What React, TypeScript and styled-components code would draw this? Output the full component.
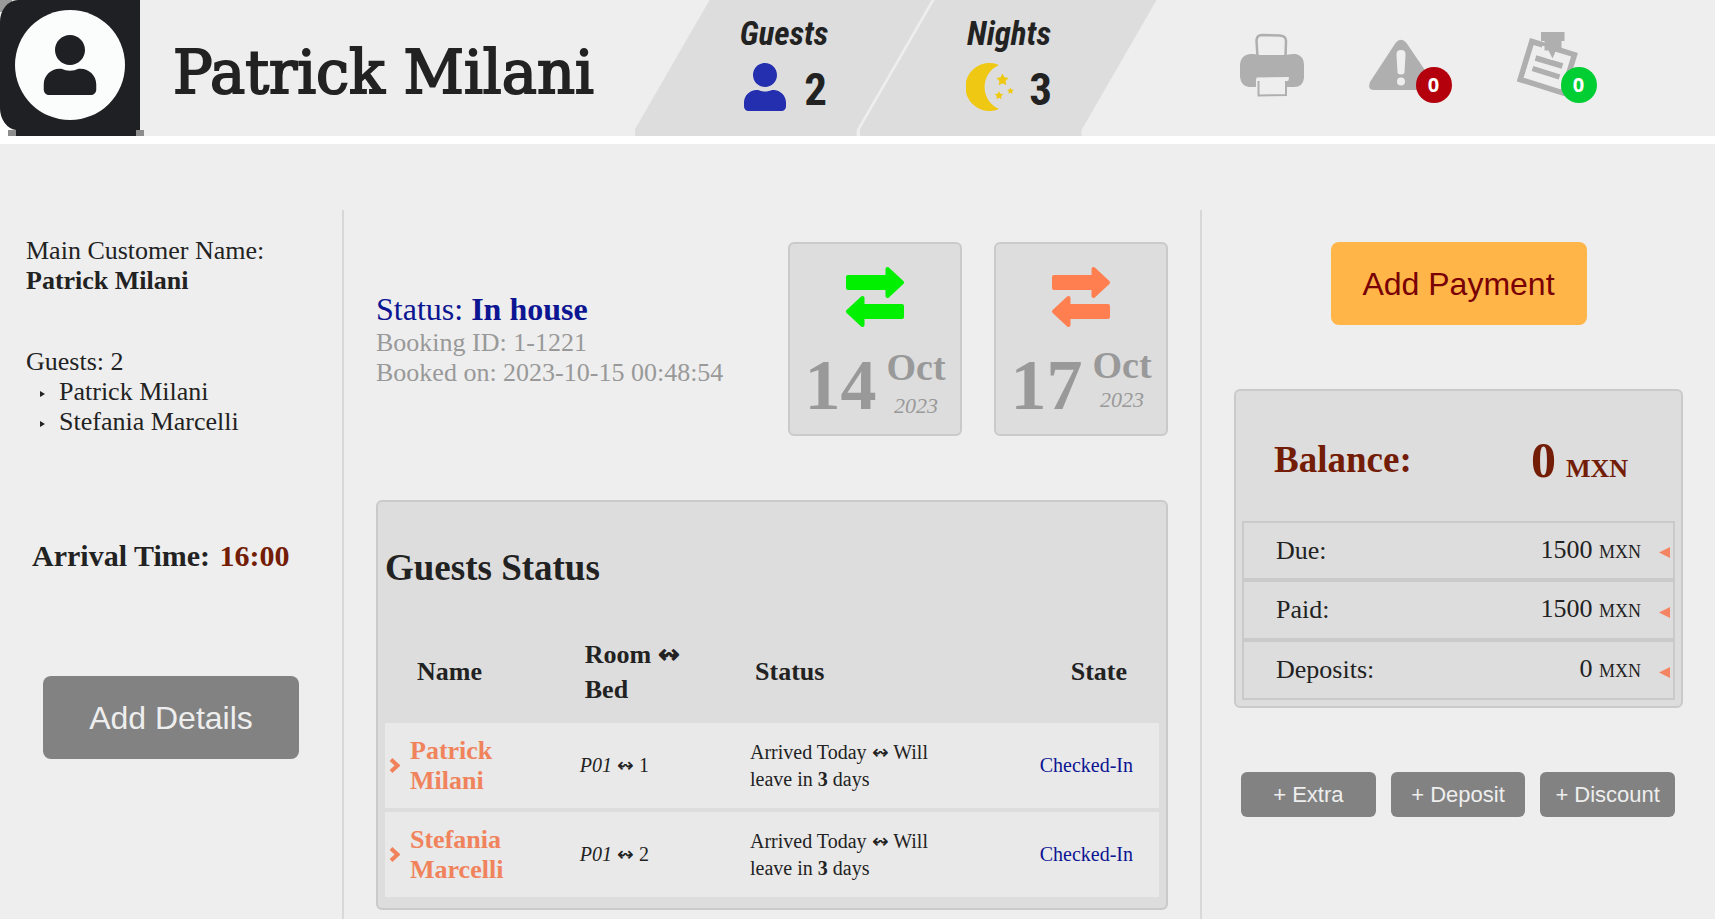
import React from "react";
import styled, { createGlobalStyle } from "styled-components";
import { FaUser } from "react-icons/fa";

const GlobalStyle = createGlobalStyle`
  *, *::before, *::after { box-sizing: border-box; }
  html, body, #root { margin: 0; min-height: 100vh; }
  body {
    background: #eee;
    color: #222;
    font: 26px/30px "Liberation Serif", "Times New Roman", serif;
    overflow-x: hidden;
  }
  h1, h2, h3, p, ul { margin: 0; padding: 0; }
  button { border: 0; cursor: pointer; }
`;

const Page = styled.div`
  display: flex;
  flex-direction: column;
  min-height: 100vh;
`;

/* ---------- header ---------- */

const Header = styled.header`
  display: flex;
  height: 144px;
  border-bottom: 8px solid #fff;
`;

const Identity = styled.div`
  display: flex;
  flex: 0 0 37%;
  gap: 29px;
`;

const CustomerName = styled.h1`
  padding-top: 38px;
  font: 400 59px/70px "DejaVu Serif", serif;
  white-space: nowrap;
  -webkit-text-stroke: 2px #222;
`;

const Tile = styled.section`
  display: flex;
  flex-direction: column;
  align-items: center;
  gap: 10px;
  width: 297px;
  padding: 15px 0 0 2px;
  background: #ddd;
  clip-path: polygon(75px 0, 100% 0, calc(100% - 75px) 130px, calc(100% - 75px) 100%, 0 100%, 0 130px);

  & + & { margin-left: -72px; }
`;

const TileTitle = styled.h2`
  font: italic 700 33px/38px "Roboto Condensed", Roboto, sans-serif;
`;

const TileValue = styled.div`
  display: flex;
  align-items: flex-start;
  gap: 15px;
  font: 700 45px/53px "Roboto Condensed", Roboto, sans-serif;
`;

const Actions = styled.nav`
  display: flex;
  align-items: flex-start;
  gap: 65px;
  padding: 33px 0 0 83px;
`;

const IconButton = styled.button<{ $width: number }>`
  position: relative;
  display: flex;
  align-items: center;
  width: ${(p) => p.$width}px;
  height: 64px;
  padding: 0;
  background: none;
  color: #afafaf;
`;

const Badge = styled.span<{ $color: string }>`
  position: absolute;
  right: 0;
  top: 34px;
  width: 36px;
  height: 36px;
  border-radius: 50%;
  background: ${(p) => p.$color};
  color: #fff;
  font: 700 20px/36px "Noto Sans", sans-serif;
  text-align: center;
`;

/* ---------- columns ---------- */

const Columns = styled.main`
  display: grid;
  grid-template-columns: 344fr 858fr 513fr;
  flex: 1;
  padding-top: 66px;
`;

const Column = styled.section<{ $divided?: boolean }>`
  min-width: 0;
  padding: 32px 32px 10px;
  border-right: ${(p) => (p.$divided ? "2px solid #d8d8d8" : "0")};
`;

const SideColumn = styled(Column)`
  padding: 26px 26px 10px;
`;

const Panel = styled.section`
  border: 2px solid #cacaca;
  border-radius: 6px;
  background: #ddd;
`;

const BigButton = styled.button<{ $accent?: boolean }>`
  display: block;
  width: 256px;
  height: 83px;
  margin: 0 auto;
  border-radius: 8px;
  background: ${(p) => (p.$accent ? "#ffb547" : "#828282")};
  color: ${(p) => (p.$accent ? "#780005" : "#eee")};
  font: 32px/38px "Liberation Sans", Arial, sans-serif;
`;

const GuestBlock = styled.div`
  margin-top: 51px;
`;

const GuestList = styled.ul`
  list-style: none;
`;

const GuestItem = styled.li`
  display: flex;
  align-items: center;
  gap: 14px;
  padding-left: 14px;

  svg { margin-top: 3px; }
`;

const Arrival = styled.p`
  margin: 101px 0 103px 6px;
  font-weight: 700;
  font-size: 30px;
  line-height: 35px;
  white-space: nowrap;
`;

const ArrivalTime = styled.span`
  margin-left: 2px;
  color: #731c06;
`;

/* ---------- booking summary ---------- */

const Summary = styled.div`
  display: flex;
  align-items: center;
  gap: 32px;
  margin-bottom: 64px;
`;

const BookingInfo = styled.div`
  flex: 1;
  color: #999;
`;

const BookingStatus = styled.p`
  color: #0c1592;
  font-size: 32px;
  line-height: 37px;
`;

const DateCard = styled(Panel)`
  display: flex;
  flex-direction: column;
  align-items: center;
  justify-content: space-between;
  width: 174px;
  height: 194px;
  padding: 23px 0 11px;
  color: #999;
`;

const DateRow = styled.div`
  display: flex;
  align-items: flex-start;
  gap: 10px;
  height: 76px;
`;

const Day = styled.span`
  font-weight: 700;
  font-size: 72px;
  line-height: 76px;
`;

const MonthYear = styled.span<{ $raised?: boolean }>`
  display: flex;
  flex-direction: column;
  align-items: center;
  gap: ${(p) => (p.$raised ? 3 : 7)}px;
  padding-top: ${(p) => (p.$raised ? 0 : 2)}px;
`;

const Month = styled.b`
  font-size: 38px;
  line-height: 37px;
`;

const Year = styled.i`
  font-size: 22px;
  line-height: 26px;
`;

/* ---------- guests table ---------- */

const GuestsPanel = styled(Panel)`
  padding: 44px 7px 7px;
`;

const PanelTitle = styled.h3`
  font-size: 37px;
  line-height: 43px;
`;

const GuestsTable = styled.table`
  width: 100%;
  margin-top: 31px;
  border-collapse: separate;
  border-spacing: 0 4px;
  table-layout: fixed;
`;

const HeadCell = styled.th<{ $width: number; $right?: boolean }>`
  width: ${(p) => p.$width}%;
  height: 95px;
  padding: ${(p) => (p.$right ? "0 32px 0 0" : "0 14px")};
  text-align: ${(p) => (p.$right ? "right" : "left")};
  font-size: 26px;
  line-height: 35px;

  &:first-child { padding-left: 32px; }
`;

const Cell = styled.td`
  height: 85px;
  padding: 0 9px;
  background: #e9e9e9;
  font-size: 20px;
  line-height: 27px;
`;

const NameCell = styled(Cell)`
  padding-left: 4px;
`;

const StateCell = styled(Cell)`
  padding-right: 26px;
  color: #0c1592;
  text-align: right;
`;

const GuestLink = styled.a`
  display: flex;
  align-items: center;
  gap: 10px;
  color: #f0835c;
  font-weight: 700;
  font-size: 26px;
  line-height: 30px;
  text-decoration: none;

  svg { flex: none; }
`;

/* ---------- balance ---------- */

const BalancePanel = styled(Panel)`
  margin: 64px 0;
  padding: 0 6px 6px;
`;

const BalanceRow = styled.div`
  display: flex;
  align-items: center;
  justify-content: space-between;
  height: 130px;
  padding: 6px 47px 0 32px;
  color: #731c06;
`;

const Total = styled.strong`
  padding-top: 10px;
  font-size: 50px;
  line-height: 56px;
`;

const TotalCurrency = styled.span`
  margin-left: 10px;
  font-size: 26px;
`;

const Ledger = styled.div`
  border: 2px solid #cacaca;
`;

const LedgerRow = styled.button`
  display: flex;
  align-items: center;
  width: 100%;
  height: 55px;
  padding: 0 3px 0 32px;
  background: none;
  color: #222;
  font: 26px/30px "Liberation Serif", "Times New Roman", serif;
  text-align: left;

  & + & {
    height: 60px;
    border-top: 4px solid #cacaca;
  }

  svg { margin: 4px 0 0 18px; }
`;

const Amount = styled.span`
  margin-left: auto;
`;

const Currency = styled.small`
  font-size: 18px;
`;

const Extras = styled.div`
  display: grid;
  grid-template-columns: repeat(3, 1fr);
  gap: 15px;
  padding: 0 8px 0 7px;
`;

const SmallButton = styled.button`
  height: 45px;
  padding: 0;
  border-radius: 6px;
  background: #828282;
  color: #eee;
  font: 22px/26px "Liberation Sans", Arial, sans-serif;
  white-space: nowrap;
`;

/* ---------- drawings ---------- */

const Avatar = () => (
  <svg width="144" height="136" viewBox="0 0 144 136" role="img" aria-label="Customer">
    <rect width="12" height="12" fill="#999" />
    <path d="M0 112h16v24H0z" fill="#fff" />
    <path d="M140 0H18A18 22 0 0 0 0 22v86a18 22 0 0 0 16 22v6h124z" fill="#1f2023" />
    <path d="M8 130h8v6H8zM136 130h8v6h-8z" fill="#8d8d8d" />
    <circle cx="70" cy="65" r="55" fill="#fbfcfc" />
    <FaUser x="40" y="35" size={60} color="#1f2023" />
  </svg>
);

const star = (cx: number, cy: number, r: number) =>
  Array.from({ length: 10 }, (_, i) => {
    const a = (Math.PI * i) / 5 - Math.PI / 2;
    const d = i % 2 ? r / 2 : r;
    return `${cx + d * Math.cos(a)},${cy + d * Math.sin(a)}`;
  }).join(" ");

const Moon = () => (
  <svg width="48" height="48" viewBox="0 0 48 48" fill="#efc814" aria-hidden="true">
    <path d="M33 2A24 24 0 1 0 33 46A24 24 0 0 1 33 2Z" />
    <polygon points={star(36.5, 17, 6.5)} />
    <polygon points={star(44.5, 28, 3.5)} />
    <polygon points={star(33, 32.5, 4.5)} />
  </svg>
);

const Printer = () => (
  <svg width="64" height="64" viewBox="0 0 64 64" fill="currentColor" aria-hidden="true">
    <path
      d="M17.500 24 16.500 8Q16.500 2 22 2L40 2.500Q46 3 46 8L45.500 24"
      fill="none"
      stroke="currentColor"
      strokeWidth="2.500"
    />
    <path d="M10 21Q14 20.500 20 22H46Q52 20.500 56 21Q64 23 64 32V45Q63 54 54 54H47V46H16V54H9Q1 53 0 44V31Q1 22 10 21Z" />
    <path d="M16.500 44.500 49 44 48.500 47.500 46 48.500 46 62 18 62.500 18 49 16.500 47.500Z" fill="#eee" />
    <path d="M18.500 48V62.500L46 62V48" fill="none" stroke="currentColor" strokeWidth="2" />
  </svg>
);

const Warning = () => (
  <svg width="65" height="64" viewBox="0 0 65 64" fill="currentColor" aria-hidden="true">
    <path d="M26.500 10Q32 3.500 37.500 10L64 49Q66 57 60 57H5Q-2 57 1 49Z" />
    <path d="M27.500 22Q27 17 32 17Q37 17 36.500 22L35.500 39Q35.500 41.500 32 41.500Q28.500 41.500 28.500 39Z" fill="#eee" />
    <circle cx="32" cy="48.500" r="4" fill="#eee" />
  </svg>
);

const Notice = () => (
  <svg width="62" height="66" viewBox="0 0 62 66" fill="currentColor" aria-hidden="true">
    <path d="M14.800 9.500 57.500 22.700 45.600 60.800 3.200 47.500Z" fill="none" stroke="currentColor" strokeWidth="5.500" />
    <path d="M18.500 26 45.500 34M15.500 36.500 42.500 45" stroke="currentColor" strokeWidth="5.500" />
    <path d="M25 14H29V19L33 20 35 28 29 26 25 20Z" fill="#eee" />
    <path d="M24 0H47.500V9H44.500V19.500H38.500L35.500 26.500 31.500 18.500H27.500V9H24Z" />
  </svg>
);

const Exchange = ({ color }: { color: string }) => (
  <svg width="58" height="60" viewBox="0 0 58 60" aria-hidden="true">
    <path
      d="M2 10H41.500V2L56 15.500 41.500 29V21H2ZM56 39H16.500V31L2 44.500 16.500 58V50H56Z"
      fill={color}
      stroke={color}
      strokeWidth="4"
      strokeLinejoin="round"
    />
  </svg>
);

const Bullet = () => (
  <svg width="5" height="6" viewBox="0 0 5 6" fill="#222" aria-hidden="true">
    <path d="M0 0 5 3 0 6Z" />
  </svg>
);

const Chevron = () => (
  <svg width="11" height="15" viewBox="0 0 11 15" fill="none" aria-hidden="true">
    <path d="M2 1.500 8.500 7.500 2 13.500" stroke="#f0835c" strokeWidth="4" />
  </svg>
);

const Marker = () => (
  <svg width="11" height="11" viewBox="0 0 11 11" fill="#f58562" aria-hidden="true">
    <path d="M11 0V11L0 5.500Z" />
  </svg>
);

/* ---------- data ---------- */

const guests = [
  { first: "Patrick", last: "Milani", room: "P01", bed: 1 },
  { first: "Stefania", last: "Marcelli", room: "P01", bed: 2 },
];

const ledger = [
  { label: "Due:", amount: 1500 },
  { label: "Paid:", amount: 1500 },
  { label: "Deposits:", amount: 0 },
];

const dates = [
  { day: 14, color: "#00f000", raised: false },
  { day: 17, color: "#ff7f50", raised: true },
];

export default function App() {
  return (
    <Page>
      <GlobalStyle />
      <Header>
        <Identity>
          <Avatar />
          <CustomerName>Patrick Milani</CustomerName>
        </Identity>
        <Tile>
          <TileTitle>Guests</TileTitle>
          <TileValue>
            <FaUser size={48} color="#232fae" />2
          </TileValue>
        </Tile>
        <Tile>
          <TileTitle>Nights</TileTitle>
          <TileValue>
            <Moon />3
          </TileValue>
        </Tile>
        <Actions>
          <IconButton $width={64} aria-label="Print">
            <Printer />
          </IconButton>
          <IconButton $width={83} aria-label="Alerts">
            <Warning />
            <Badge $color="#b3000c">0</Badge>
          </IconButton>
          <IconButton $width={80} aria-label="Notes">
            <Notice />
            <Badge $color="#00ce33">0</Badge>
          </IconButton>
        </Actions>
      </Header>

      <Columns>
        <SideColumn $divided>
          <p>Main Customer Name:</p>
          <p>
            <b>Patrick Milani</b>
          </p>
          <GuestBlock>
            <p>Guests: 2</p>
            <GuestList>
              {guests.map((g) => (
                <GuestItem key={g.first}>
                  <Bullet />
                  {g.first} {g.last}
                </GuestItem>
              ))}
            </GuestList>
          </GuestBlock>
          <Arrival>
            Arrival Time: <ArrivalTime>16:00</ArrivalTime>
          </Arrival>
          <BigButton>Add Details</BigButton>
        </SideColumn>

        <Column $divided>
          <Summary>
            <BookingInfo>
              <BookingStatus>
                Status: <b>In house</b>
              </BookingStatus>
              <p>Booking ID: 1-1221</p>
              <p>Booked on: 2023-10-15 00:48:54</p>
            </BookingInfo>
            {dates.map((d) => (
              <DateCard key={d.day}>
                <Exchange color={d.color} />
                <DateRow>
                  <Day>{d.day}</Day>
                  <MonthYear $raised={d.raised}>
                    <Month>Oct</Month>
                    <Year>2023</Year>
                  </MonthYear>
                </DateRow>
              </DateCard>
            ))}
          </Summary>

          <GuestsPanel>
            <PanelTitle>Guests Status</PanelTitle>
            <GuestsTable>
              <thead>
                <tr>
                  <HeadCell $width={24}>Name</HeadCell>
                  <HeadCell $width={22}>Room ↭ Bed</HeadCell>
                  <HeadCell $width={29}>Status</HeadCell>
                  <HeadCell $width={25} $right>
                    State
                  </HeadCell>
                </tr>
              </thead>
              <tbody>
                {guests.map((g) => (
                  <tr key={g.first}>
                    <NameCell>
                      <GuestLink href="#">
                        <Chevron />
                        <span>
                          {g.first} {g.last}
                        </span>
                      </GuestLink>
                    </NameCell>
                    <Cell>
                      <i>{g.room}</i> ↭ {g.bed}
                    </Cell>
                    <Cell>
                      Arrived Today ↭ Will
                      <br />
                      leave in <b>3</b> days
                    </Cell>
                    <StateCell>Checked-In</StateCell>
                  </tr>
                ))}
              </tbody>
            </GuestsTable>
          </GuestsPanel>
        </Column>

        <Column>
          <BigButton $accent>Add Payment</BigButton>
          <BalancePanel>
            <BalanceRow>
              <PanelTitle>Balance:</PanelTitle>
              <Total>
                0<TotalCurrency>MXN</TotalCurrency>
              </Total>
            </BalanceRow>
            <Ledger>
              {ledger.map((l) => (
                <LedgerRow key={l.label}>
                  {l.label}
                  <Amount>
                    {l.amount} <Currency>MXN</Currency>
                  </Amount>
                  <Marker />
                </LedgerRow>
              ))}
            </Ledger>
          </BalancePanel>
          <Extras>
            <SmallButton>+ Extra</SmallButton>
            <SmallButton>+ Deposit</SmallButton>
            <SmallButton>+ Discount</SmallButton>
          </Extras>
        </Column>
      </Columns>
    </Page>
  );
}
